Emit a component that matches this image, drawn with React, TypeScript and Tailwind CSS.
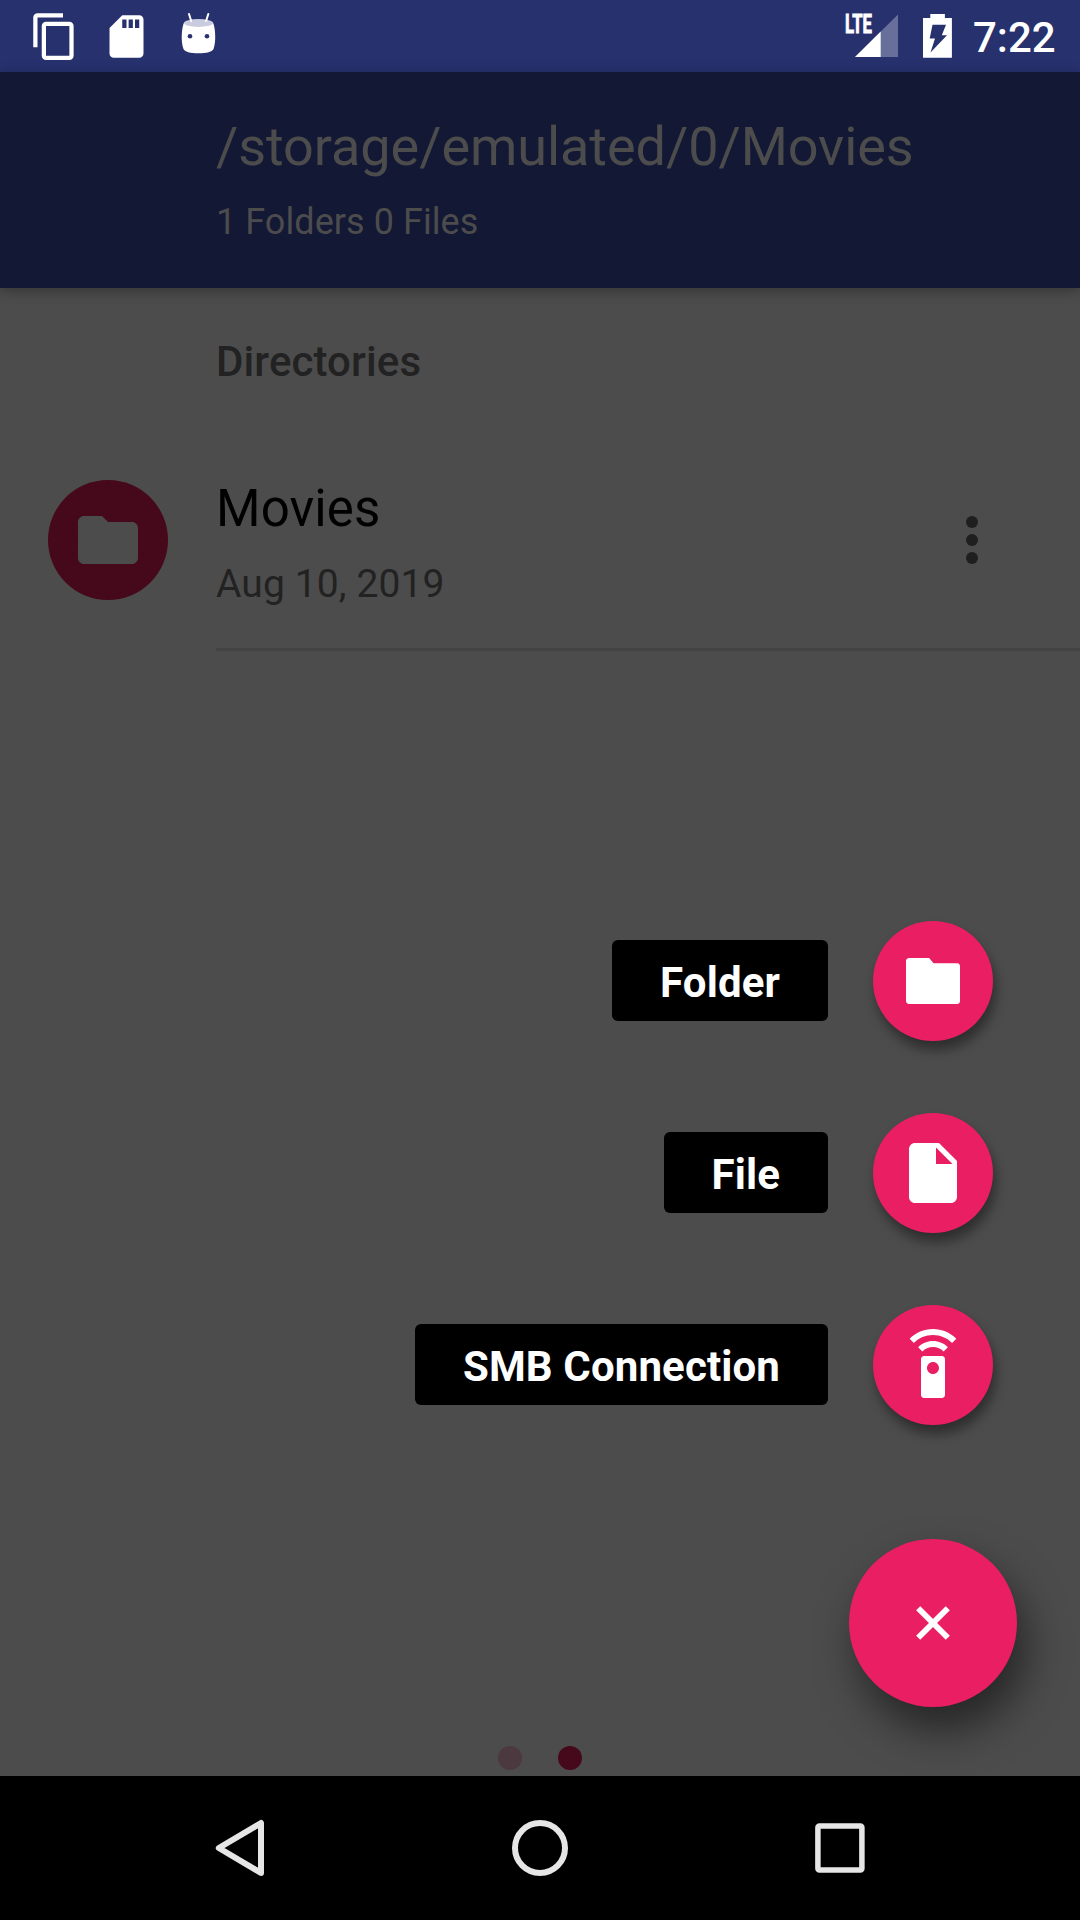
import type { ReactNode } from "react";

const FOLDER = "M10 4H4c-1.1 0-1.99.9-1.99 2L2 18c0 1.1.9 2 2 2h16c1.1 0 2-.9 2-2V8c0-1.1-.9-2-2-2h-8l-2-2z";

function StatusBar() {
  return (
    <div className="flex h-[72px] shrink-0 items-start bg-[#27316d] text-white">
      <div className="flex gap-[21px] pl-[28.5px] pt-[10.5px]">
        <svg className="size-[51px]" viewBox="0 0 24 24" fill="currentColor">
          <path d="M16 1H4c-1.1 0-2 .9-2 2v14h2V3h12V1zm3 4H8c-1.1 0-2 .9-2 2v14c0 1.1.9 2 2 2h11c1.1 0 2-.9 2-2V7c0-1.1-.9-2-2-2zm0 16H8V7h11v14z" />
        </svg>
        <svg className="size-[51px]" viewBox="0 0 24 24" fill="currentColor">
          <path d="M18 2h-8L4.02 8 4 20c0 1.1.9 2 2 2h12c1.1 0 2-.9 2-2V4c0-1.1-.9-2-2-2zm-6 6h-2V4h2v4zm3 0h-2V4h2v4zm3 0h-2V4h2v4z" />
        </svg>
        <svg className="size-[51px]" viewBox="172.5 10.5 51 51">
          <path d="M183.5 22C181 28 180.3 41 182.8 48C184 51.500 190 52.800 198 52.800S212 51.500 213.200 48C215.700 41 215 28 212.500 22Z" fill="#fff" />
          <ellipse cx="198" cy="22.500" rx="14.500" ry="3.900" fill="#c9cbdf" />
          <path d="M188.500 13.500L190.700 20.500M207.800 13.500L205.600 20.500" stroke="#fff" strokeWidth="2" strokeLinecap="round" />
          <circle cx="189.500" cy="35.800" r="2.300" fill="#27316d" />
          <circle cx="206.500" cy="35.800" r="2.300" fill="#27316d" />
        </svg>
      </div>
      <svg className="ml-auto h-[72px] w-[60px]" viewBox="842 0 60 72">
        <text x="845" y="33" fontFamily="Roboto" fontWeight="700" fontSize="25.500" textLength="27" lengthAdjust="spacingAndGlyphs" fill="#fff" stroke="#fff" strokeWidth="0.900">LTE</text>
        <path d="M898 14.500V57H855Z" fill="#696f9b" />
        <path d="M880.700 31.500V57H855Z" fill="#fff" />
      </svg>
      <svg className="ml-[18px] h-[72px] w-[36px]" viewBox="920 0 36 72">
        <path fillRule="evenodd" fill="#fff" d="M930.300 14h14.600v4h7v39.700H923V18h7.300ZM932.500 24.700L929.700 38.500H935L930.500 52.500L947 35.300H941.800L946 24.700Z" />
      </svg>
      <span className="ml-[17px] w-[107px] whitespace-nowrap pt-[11px] text-[42px] font-medium leading-[53px]">7:22</span>
    </div>
  );
}

function Header() {
  return (
    <header className="z-10 h-[216px] shrink-0 bg-[#131835] pl-[216px] pt-[43px] text-[#4c4c4c] shadow-[0_3px_12px_rgba(0,0,0,0.3)]">
      <h1 className="text-[54px] leading-[64px] tracking-[-0.06px]">/storage/emulated/0/Movies</h1>
      <p className="mt-[21px] text-[36px] leading-[44px] tracking-[0.06px]">1 Folders 0 Files</p>
    </header>
  );
}

function DirectoryRow() {
  return (
    <div className="flex h-[216px] items-start">
      <div className="ml-[48px] mt-[45px] flex size-[120px] items-center justify-center rounded-full bg-[#46081b]">
        <svg className="size-[72px]" viewBox="0 0 24 24" fill="#4c4c4c"><path d={FOLDER} /></svg>
      </div>
      <div className="ml-[48px] flex h-[216px] flex-1 border-b-[3px] border-[#434343]">
        <div className="flex-1 pt-[44px]">
          <div className="text-[51px] leading-[60px] tracking-[0.1px] text-black">Movies</div>
          <div className="mt-[20px] text-[39px] leading-[50px] tracking-[0.12px] text-[#222]">Aug 10, 2019</div>
        </div>
        <div className="mr-[102px] mt-[81px] flex flex-col gap-[6px]">
          <i className="size-[12px] rounded-full bg-[#1f1f1f]" />
          <i className="size-[12px] rounded-full bg-[#1f1f1f]" />
          <i className="size-[12px] rounded-full bg-[#1f1f1f]" />
        </div>
      </div>
    </div>
  );
}

function Action({ label, children }: { label: string; children: ReactNode }) {
  return (
    <div className="flex h-[120px] items-center gap-[45px]">
      <span className="mb-px flex h-[81px] items-center rounded-[6px] bg-black px-[48px] pt-[4px] text-[42px] font-bold leading-[50px] tracking-[0.13px] text-white">{label}</span>
      <span className="flex size-[120px] items-center justify-center rounded-full bg-[#e91e63] shadow-[3px_9px_12px_rgba(0,0,0,0.4)]">
        <svg className="size-[72px]" viewBox="0 0 24 24" fill="#fff">{children}</svg>
      </span>
    </div>
  );
}

function NavBar() {
  return (
    <nav className="flex h-[144px] shrink-0 items-center justify-center gap-[228px] bg-black">
      <svg className="size-[72px]" viewBox="204 1812 72 72" fill="none" stroke="#e6e6e6" strokeWidth="6" strokeLinejoin="round">
        <path d="M261 1823V1873L218.800 1848Z" />
      </svg>
      <svg className="size-[72px]" viewBox="0 0 72 72" fill="none" stroke="#e6e6e6" strokeWidth="6">
        <circle cx="36" cy="36" r="25" />
      </svg>
      <svg className="size-[72px]" viewBox="0 0 72 72" fill="none" stroke="#e6e6e6" strokeWidth="5.500">
        <rect x="13.900" y="13.900" width="44" height="44" rx="1.500" />
      </svg>
    </nav>
  );
}

export default function App() {
  return (
    <div className="flex h-[1920px] w-[1080px] flex-col overflow-hidden bg-[#4c4c4c] font-[Roboto,sans-serif]">
      <StatusBar />
      <Header />
      <main className="flex h-[1488px] shrink-0 flex-col">
        <h2 className="h-[147px] pl-[216px] pt-[49px] text-[42px] font-medium leading-[50px] tracking-[0.1px] text-[#222]">Directories</h2>
        <DirectoryRow />
        <div className="mt-[270px] flex flex-col items-end gap-[72px] pr-[87px]">
          <Action label="Folder">
            <path d="M4 4.330h6.700l1.500 1.780h7.900c.5 0 .9.400.9.900v11.700c0 .5-.4.950-.9.950H4c-.55 0-1-.45-1-1V5.330c0-.55.45-1 1-1z" />
          </Action>
          <Action label="File">
            <path d="M6 2c-1.100 0-1.990.9-1.990 2L4 20c0 1.100.89 2 1.990 2H18c1.100 0 2-.9 2-2V8l-6-6H6zm7 7V3.500L18.500 9H13z" />
          </Action>
          <Action label="SMB Connection">
            <path d="M15 9H9c-.55 0-1 .45-1 1v12c0 .55.45 1 1 1h6c.55 0 1-.45 1-1V10c0-.55-.45-1-1-1zm-3 6c-1.100 0-2-.9-2-2s.9-2 2-2 2 .9 2 2-.9 2-2 2zM7.050 6.050l1.410 1.410C9.370 6.560 10.620 6 12 6s2.630.56 3.540 1.460l1.410-1.410C15.680 4.780 13.930 4 12 4s-3.680.78-4.950 2.050zM12 0C8.960 0 6.210 1.230 4.220 3.220l1.410 1.410C7.260 3.010 9.510 2 12 2s4.740 1.010 6.360 2.640l1.410-1.410C17.790 1.230 15.040 0 12 0z" />
          </Action>
        </div>
        <div className="mt-[114px] flex justify-end pr-[63px]">
          <span className="flex size-[168px] items-center justify-center rounded-full bg-[#e91e63] shadow-[9px_23px_42px_rgba(0,0,0,0.5)]">
            <svg className="size-[72px]" viewBox="0 0 72 72" stroke="#fff" strokeWidth="5.800">
              <path d="M21.200 21.200L50.800 50.800M50.800 21.200L21.200 50.800" />
            </svg>
          </span>
        </div>
        <div className="z-10 mt-[39px] flex justify-center gap-[36px]">
          <i className="size-[24px] rounded-full bg-[#4b393f]" />
          <i className="size-[24px] rounded-full bg-[#46081b]" />
        </div>
      </main>
      <NavBar />
    </div>
  );
}
